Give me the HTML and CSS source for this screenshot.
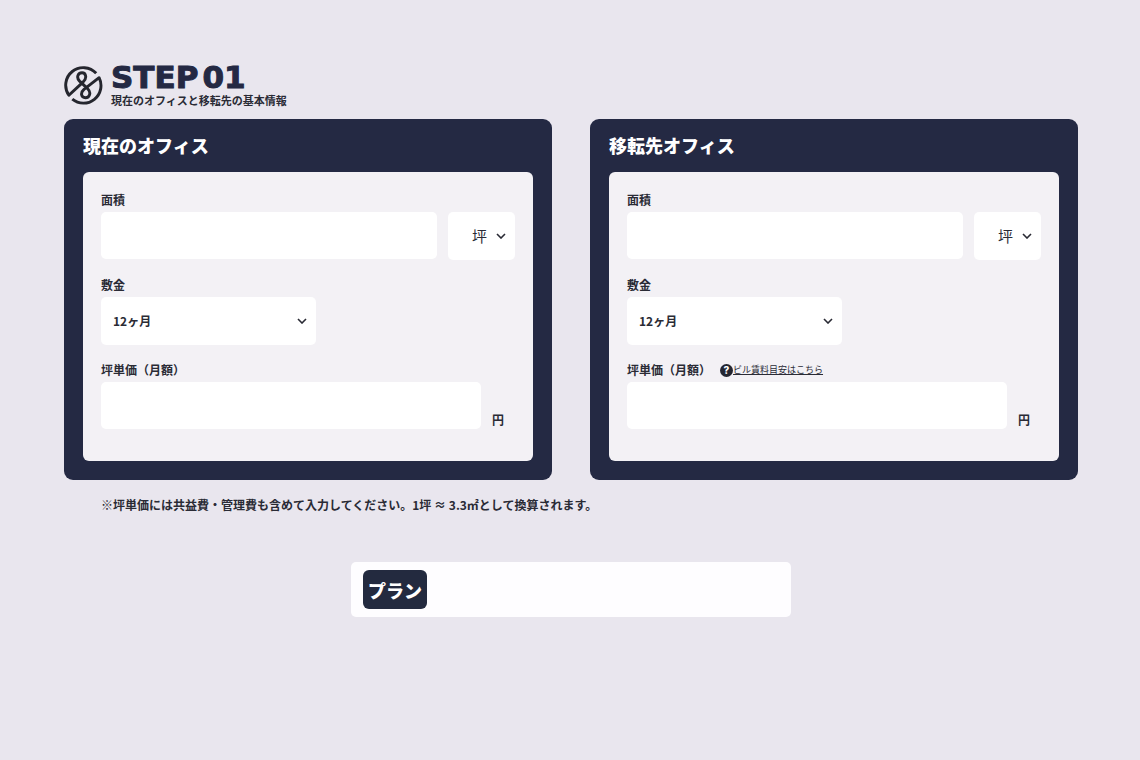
FILE: index.html
```html
<!DOCTYPE html>
<html lang="ja">
<head>
    <meta charset="UTF-8">
    <meta name="viewport" content="width=device-width, initial-scale=1.0">
    <title>STEP 01</title>
    <link rel="stylesheet" href="styles.css">
</head>
<body>

<main class="page">
    <header class="step">
        <svg class="step-icon" viewBox="0 0 40 40" aria-hidden="true">
            <path d="M33 7.500A18 18 0 0 0 5 30L19.500 16.500C24 12.500 22.500 7 18.500 7C14 7 12.500 12 16 15.500L24.500 23.500C28 27 26.500 32.500 22 32.500C17.500 32.500 16.500 27.500 20.500 24L36 12A18 18 0 0 1 8.500 34"/>
        </svg>
        <div>
            <h1 class="step-title">STEP<span class="step-number">01</span></h1>
            <p class="step-text">現在のオフィスと移転先の基本情報</p>
        </div>
    </header>

    <div class="offices">
        <section class="office">
            <h2 class="office-title">現在のオフィス</h2>
            <div class="office-body">
                <div class="label-row"><label for="area1">面積</label></div>
                <div class="field-row">
                    <input class="field" type="text" id="area1">
                    <select class="field unit" aria-label="単位">
                        <option>坪</option>
                    </select>
                </div>
                <div class="label-row"><label for="deposit1">敷金</label></div>
                <div class="field-row">
                    <select class="field month" id="deposit1">
                        <option>12ヶ月</option>
                    </select>
                </div>
                <div class="label-row"><label for="price1">坪単価（月額）</label></div>
                <div class="field-row">
                    <input class="field" type="text" id="price1">
                    <span class="yen">円</span>
                </div>
            </div>
        </section>

        <section class="office">
            <h2 class="office-title">移転先オフィス</h2>
            <div class="office-body">
                <div class="label-row"><label for="area2">面積</label></div>
                <div class="field-row">
                    <input class="field" type="text" id="area2">
                    <select class="field unit" aria-label="単位">
                        <option>坪</option>
                    </select>
                </div>
                <div class="label-row"><label for="deposit2">敷金</label></div>
                <div class="field-row">
                    <select class="field month" id="deposit2">
                        <option>12ヶ月</option>
                    </select>
                </div>
                <div class="label-row">
                    <label for="price2">坪単価（月額）</label>
                    <a class="guide" href="#"><span class="help">?</span><span class="guide-text">ビル賃料目安はこちら</span></a>
                </div>
                <div class="field-row">
                    <input class="field" type="text" id="price2">
                    <span class="yen">円</span>
                </div>
            </div>
        </section>
    </div>

    <p class="note">※坪単価には共益費・管理費も含めて入力してください。1坪 ≈ 3.3㎡として換算されます。</p>

    <div class="plan-bar">
        <button class="plan" type="button">プラン</button>
    </div>
</main>

</body>
</html>
```
FILE: styles.css
```css
* {
    box-sizing: border-box;
}
body {
    margin: 0;
    background: #e9e6ee;
    color: #2a2b35;
    font-family: "Noto Sans CJK JP", sans-serif;
    font-size: 12px;
    line-height: 18px;
    font-weight: bold;
}
h1, h2, p {
    margin: 0;
}
.page {
    padding: 62px 62px 40px 64px;
}
.step {
    display: flex;
    align-items: center;
    gap: 8px;
    margin-bottom: 11px;
}
.step-icon {
    width: 39px;
    height: 39px;
    fill: none;
    stroke: #25262e;
    stroke-width: 3;
    stroke-linejoin: round;
}
.step-title {
    display: flex;
    gap: 4px;
    color: #242943;
    font-family: "DejaVu Sans", sans-serif;
    font-size: 31px;
    font-weight: bold;
    line-height: 30px;
    -webkit-text-stroke: 1px #242943;
}
.step-text {
    font-size: 11px;
    line-height: 16px;
}
.offices {
    display: grid;
    grid-template-columns: 1fr 1fr;
    gap: 38px;
}
.office {
    padding: 12px 19px 19px;
    background: #242943;
    border-radius: 9px;
}
.office-title {
    margin-bottom: 13px;
    color: #fff;
    font-size: 18px;
    font-weight: 900;
    line-height: 28px;
}
.office-body {
    padding: 18px 18px 32px;
    background: #f3f1f5;
    border-radius: 6px;
}
.label-row {
    display: flex;
    align-items: center;
    gap: 9px;
    height: 20px;
    margin-bottom: 2px;
}
.field-row {
    display: flex;
    gap: 11px;
}
.field-row + .label-row {
    margin-top: 15px;
}
.field {
    flex: 1;
    min-width: 0;
    height: 48px;
    padding: 0 12px;
    border: 0;
    border-radius: 5px;
    background-color: #fff;
    color: inherit;
    font: inherit;
}
input.field {
    height: 47px;
}
select.field {
    appearance: none;
    background-image: url("data:image/svg+xml,%3Csvg xmlns='http://www.w3.org/2000/svg' viewBox='0 0 10 6'%3E%3Cpath d='M1 1l4 4 4-4' fill='none' stroke='%23292a34' stroke-width='1.6'/%3E%3C/svg%3E");
    background-repeat: no-repeat;
    background-position: right 9px center;
    background-size: 10px 6px;
}
.unit {
    flex: none;
    width: 67px;
    padding: 0 24px;
    font-size: 15px;
    font-weight: 400;
}
.month {
    flex: none;
    width: 52%;
}
.yen {
    width: 23px;
    align-self: flex-end;
}
.guide {
    display: flex;
    align-items: center;
    color: inherit;
    font-size: 9px;
    font-weight: 400;
    text-decoration: none;
}
.guide-text {
    text-decoration: underline;
}
.help {
    width: 13px;
    height: 13px;
    border-radius: 50%;
    background: #242631;
    color: #fff;
    font-family: Inter, sans-serif;
    font-size: 10px;
    font-weight: 800;
    line-height: 13px;
    text-align: center;
}
.note {
    margin: 16px 0 48px 37px;
}
.plan-bar {
    width: 440px;
    max-width: 100%;
    margin: 0 auto;
    padding: 8px 12px;
    background: #fefdff;
    border-radius: 5px;
}
.plan {
    display: block;
    height: 39px;
    padding: 0 5px;
    border: 0;
    border-radius: 6px;
    background: #232a3f;
    color: #fff;
    font: inherit;
    font-size: 18px;
    font-weight: 900;
}
```
